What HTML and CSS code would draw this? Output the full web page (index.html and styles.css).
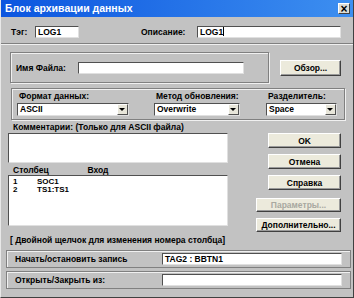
FILE: index.html
```html
<!DOCTYPE html>
<html lang="ru">
<head>
    <meta charset="UTF-8">
    <title>Блок архивации данных</title>
    <link rel="stylesheet" href="styles.css">
</head>
<body>
    <div class="window">
        <!-- Title bar -->
        <div class="titlebar">
            <span class="title">Блок архивации данных</span>
            <span class="close-btn">×</span>
        </div>

        <div class="content">
            <div class="tag-row">
                <label class="tag-label">Тэг:</label>
                <div class="field tag-input">LOG1</div>
                <label class="desc-label">Описание:</label>
                <div class="field desc-input">LOG1<span class="caret"></span></div>
            </div>

            <div class="separator"></div>

            <div class="file-row">
                <div class="group file-group">
                    <label>Имя Файла:</label>
                    <div class="field file-input"></div>
                </div>
                <button class="btn browse-btn">Обзор...</button>
            </div>

            <div class="group format-group">
                <div class="format-col col-format">
                    <label>Формат данных:</label>
                    <div class="field select">ASCII<span class="drop"></span></div>
                </div>
                <div class="format-col col-method">
                    <label>Метод обновления:</label>
                    <div class="field select">Overwrite<span class="drop"></span></div>
                </div>
                <div class="format-col col-sep">
                    <label>Разделитель:</label>
                    <div class="field select">Space<span class="drop"></span></div>
                </div>
            </div>

            <div class="middle">
                <div class="left-col">
                    <label class="comments-label">Комментарии: (Только для ASCII файла)</label>
                    <div class="field comments"></div>
                    <div class="list-header">
                        <span class="col-num">Столбец</span>
                        <span>Вход</span>
                    </div>
                    <div class="field listbox">
                        <div class="list-item"><span class="col-num">1</span>SOC1</div>
                        <div class="list-item"><span class="col-num">2</span>TS1:TS1</div>
                    </div>
                </div>
                <div class="right-col">
                    <button class="btn small-btn">OK</button>
                    <button class="btn small-btn">Отмена</button>
                    <button class="btn small-btn">Справка</button>
                    <button class="btn wide-btn disabled">Параметры...</button>
                    <button class="btn wide-btn">Дополнительно...</button>
                </div>
            </div>

            <div class="note">[ Двойной щелчок для изменения номера столбца]</div>

            <div class="panel first">
                <label>Начать/остановить запись</label>
                <div class="field panel-input">TAG2 : BBTN1</div>
            </div>
            <div class="panel">
                <label>Открыть/Закрыть из:</label>
                <div class="field panel-input"></div>
            </div>
        </div>
    </div>
</body>
</html>
```

FILE: styles.css
```css
body { margin: 0; padding: 0; background: #c2c2c2; font-family: "Liberation Sans", Arial, sans-serif; font-size: 8.5px; font-weight: bold; color: #000; }

.window {
    width: 354px;
    height: 298px;
    box-sizing: border-box;
    background: #c2c2c2;
    border-left: 1px solid #e8e8e8;
    border-right: 1px solid #404040;
    border-bottom: 1px solid #404040;
    overflow: hidden;
}

/* Title bar */
.titlebar {
    position: relative;
    height: 17px;
    background: linear-gradient(to right, #0b55df, #3d8ff0);
    color: white;
    font-size: 10.5px;
    line-height: 17px;
    padding-left: 4px;
}

.close-btn {
    position: absolute;
    right: 3px;
    top: 3px;
    width: 12px;
    height: 11px;
    background: #dcdcd4;
    color: #000;
    font-size: 12px;
    line-height: 10px;
    text-align: center;
    border: 1px solid;
    border-color: #fff #404040 #404040 #fff;
    box-sizing: border-box;
}

.content { padding: 0 4px 0 4px; }

/* Common controls */
.field {
    background: #fff;
    box-sizing: border-box;
    border: 1px solid;
    border-color: #505050 #e0e0e0 #e0e0e0 #505050;
    line-height: 10px;
    padding-left: 2px;
}

.group {
    box-sizing: border-box;
    border: 1px solid #808080;
    box-shadow: inset 1px 1px #f0f0f0, 1px 1px #f0f0f0;
}

.btn {
    display: block;
    box-sizing: border-box;
    background: #eceadc;
    border: 1px solid;
    border-color: #fff #404040 #404040 #fff;
    box-shadow: inset -1px -1px #9a9a9a;
    font-family: inherit;
    font-size: 8.5px;
    font-weight: bold;
    padding: 0;
    height: 16px;
    color: #000;
}

.btn.disabled { color: #a8a8a0; }

/* Tag row */
.tag-row {
    display: flex;
    align-items: center;
    height: 12px;
    margin-top: 9px;
}

.tag-label { margin-left: 6px; width: 24px; }
.tag-input { width: 44px; height: 12px; }
.desc-label { margin-left: 62px; width: 56px; }
.desc-input { width: 144px; height: 12px; }

.caret { display: inline-block; width: 1px; height: 9px; background: #000; vertical-align: -1px; }

.separator {
    margin: 5px -4px 0 -4px;
    border-top: 1px solid #808080;
    border-bottom: 1px solid #f0f0f0;
}

/* File row */
.file-row {
    display: flex;
    align-items: flex-start;
    margin-top: 7px;
}

.file-group {
    display: flex;
    align-items: center;
    margin-left: 5px;
    width: 259px;
    height: 31px;
    padding-left: 5px;
}

.file-group label { width: 62px; }
.file-input { width: 166px; height: 12px; }

.browse-btn { margin-left: 11px; margin-top: 8px; width: 61px; }

/* Format group */
.format-group {
    display: flex;
    margin-top: 5px;
    margin-left: 6px;
    width: 334px;
    height: 32px;
    padding-top: 2px;
}

.format-col label { display: block; height: 12px; padding-left: 2px; white-space: nowrap; }
.format-col .select { position: relative; height: 13px; }

.col-format { margin-left: 5px; width: 112px; }
.col-method { margin-left: 25px; width: 86px; }
.col-sep { margin-left: 26px; width: 71px; }

.drop {
    position: absolute;
    right: 0;
    top: 0;
    width: 11px;
    height: 11px;
    background: #e8e6da;
    box-sizing: border-box;
    border: 1px solid;
    border-color: #fff #505050 #505050 #fff;
}

.drop::after {
    content: "";
    position: absolute;
    left: 1px;
    top: 3px;
    border-left: 3.5px solid transparent;
    border-right: 3.5px solid transparent;
    border-top: 3.5px solid #000;
}

/* Middle section: the list column sets the height, buttons hang slightly lower */
.middle { display: flex; margin-top: 3px; height: 103px; }

.left-col { width: 220px; margin-left: 3px; }

.comments-label { display: block; height: 8px; padding-left: 5px; line-height: 8px; }
.comments { height: 30px; margin-top: 2px; }

.list-header { height: 10px; margin-top: 2px; padding-left: 5px; line-height: 10px; }
.col-num { display: inline-block; width: 72px; }

.listbox { height: 51px; padding-left: 4px; padding-top: 2px; line-height: 8px; font-size: 8px; }
.list-item .col-num { width: 24px; }

.right-col {
    display: flex;
    flex-direction: column;
    align-items: flex-end;
    gap: 6px;
    margin-left: 27px;
    width: 86px;
    padding-top: 10px;
}

.small-btn { width: 73px; height: 15px; flex-shrink: 0; }
.wide-btn { width: 85px; height: 14px; flex-shrink: 0; }
.right-col .wide-btn:nth-child(4) { margin-top: 2px; }

/* Note + bottom panels */
.note { margin-top: 8px; padding-left: 5px; height: 12px; line-height: 12px; }

.panel {
    display: flex;
    align-items: center;
    margin-top: 3px;
    margin-left: 1px;
    width: 345px;
    height: 18px;
    box-sizing: border-box;
    border: 1px solid #808080;
    box-shadow: inset 1px 1px #f0f0f0;
    padding-left: 8px;
}

.panel.first { margin-top: 4px; }

.panel label { width: 147px; }
.panel-input { width: 180px; height: 12px; }
```
